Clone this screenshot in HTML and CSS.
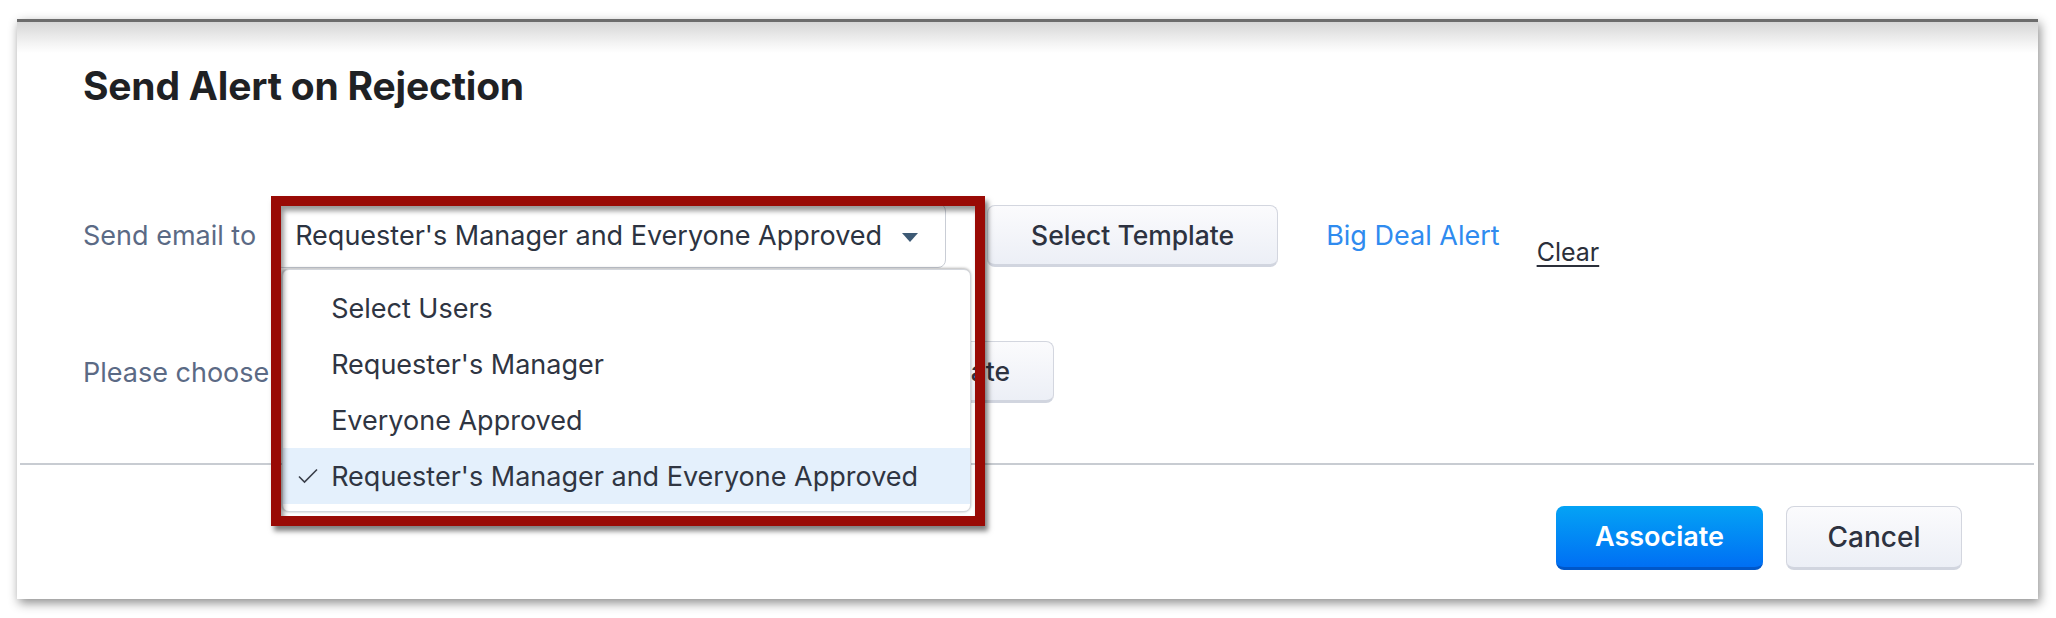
FILE: index.html
```html
<!DOCTYPE html>
<html lang="en">
<head>
<meta charset="utf-8">
<title>Send Alert on Rejection</title>
<link rel="stylesheet" href="styles.css">
</head>
<body>
<div class="frame">
  <div class="card">
    <div class="card-strip"></div>
    <h1 class="title">Send Alert on Rejection</h1>

    <div class="form-row row-email">
      <span class="label">Send email to</span>
      <div class="select-wrap">
        <div class="select">
          <span class="select-value">Requester's Manager and Everyone Approved</span>
          <svg class="caret" width="16" height="9" viewBox="0 0 16 9"><path d="M0 0H16L8 9Z" fill="#3d5a75"/></svg>
        </div>
        <ul class="menu">
          <li class="menu-item">Select Users</li>
          <li class="menu-item">Requester's Manager</li>
          <li class="menu-item">Everyone Approved</li>
          <li class="menu-item selected">
            <svg class="check" width="20" height="16" viewBox="0 0 20 16"><path d="M1 8.5L6.5 14L19 1.5" fill="none" stroke="#3a3f4a" stroke-width="1.6"/></svg>
            Requester's Manager and Everyone Approved
          </li>
        </ul>
        <div class="highlight"></div>
      </div>
      <button class="btn btn-light btn-template">Select Template</button>
      <a class="link">Big Deal Alert</a>
      <a class="clear">Clear</a>
    </div>

    <div class="form-row row-template">
      <span class="label label-col">Please choose</span>
      <button class="btn btn-light btn-template">Select Template</button>
    </div>

    <div class="divider"></div>

    <div class="footer">
      <button class="btn btn-primary">Associate</button>
      <button class="btn btn-light btn-cancel">Cancel</button>
    </div>
  </div>
</div>
</body>
</html>
```

FILE: styles.css
```css
* { box-sizing: border-box; }

html, body {
  margin: 0;
  padding: 0;
  background: #ffffff;
}

body {
  font-family: "Inter", "Liberation Sans", sans-serif;
  color: #2c3341;
}

.frame {
  padding: 19px 18px 19px 17px;
}

.card {
  background: #ffffff;
  border-top: 3px solid #6c6c6c;
  box-shadow: 2px 4px 10px rgba(0, 0, 0, 0.45);
  height: 580px;
  display: flex;
  flex-direction: column;
}

.card-strip {
  height: 31px;
  background: linear-gradient(#d6d6d6, #f4f4f4 70%, #ffffff);
}

.title {
  margin: 9px 0 0 66px;
  font-size: 39px;
  line-height: 48px;
  font-weight: 700;
  color: #1f2124;
  letter-spacing: -0.2px;
}

.form-row {
  display: flex;
  align-items: center;
  padding-left: 66px;
}

.row-email {
  margin-top: 93px;
  height: 65px;
}

.row-template {
  margin-top: 73px;
  height: 62px;
}

.label {
  font-size: 27px;
  color: #5b6a85;
  white-space: nowrap;
}

.label-col {
  width: 680px;
}

.select-wrap {
  position: relative;
  margin-left: 18px;
}

.select {
  width: 672px;
  height: 65px;
  border: 1px solid #c9cdd5;
  border-radius: 8px;
  background: #ffffff;
  display: flex;
  align-items: center;
  padding: 0 27px 0 20px;
}

.select-value {
  flex: 1;
  font-size: 27px;
  color: #2c3341;
  white-space: nowrap;
}

.caret {
  display: block;
  margin-top: 3px;
}

.menu {
  position: absolute;
  left: 8px;
  top: 66px;
  width: 689px;
  height: 243px;
  margin: 0;
  padding: 10px 0 0 0;
  list-style: none;
  background: #ffffff;
  border: 1px solid #d3d6dc;
  border-radius: 7px;
  box-shadow: -1px 0 3px rgba(0, 0, 0, 0.2), 0 -1px 3px rgba(0, 0, 0, 0.2);
  z-index: 2;
}

.menu-item {
  position: relative;
  height: 56px;
  display: flex;
  align-items: center;
  padding-left: 48px;
  font-size: 27px;
  color: #2f3542;
  white-space: nowrap;
}

.menu-item.selected {
  background: #e4f0fc;
}

.check {
  position: absolute;
  left: 15px;
  top: 20px;
}

.highlight {
  position: absolute;
  left: -3px;
  top: -7px;
  width: 714px;
  height: 330px;
  border: 10px solid #990a05;
  box-shadow: 3px 5px 5px rgba(0, 0, 0, 0.5), inset 3px 5px 5px rgba(0, 0, 0, 0.4);
  z-index: 3;
}

.btn {
  font-family: "Inter", "Liberation Sans", sans-serif;
  border-radius: 8px;
  cursor: pointer;
  padding: 0;
}

.btn-light {
  background: linear-gradient(#fbfbfd, #eceff6);
  border: 1px solid #d3d6df;
  border-bottom: 3px solid #d1d5df;
  color: #2d3240;
}

.btn-template {
  width: 291px;
  height: 62px;
  font-size: 26.5px;
  font-weight: 500;
}

.row-email .btn-template {
  margin-left: 41px;
}

.link {
  margin-left: 48px;
  font-size: 27px;
  color: #2f8bef;
  white-space: nowrap;
}

.clear {
  margin-left: 37px;
  margin-top: 32px;
  font-size: 25px;
  color: #2b2f3a;
  text-decoration: underline;
  text-underline-offset: 4px;
}

.divider {
  margin: 60px 4px 0 3px;
  height: 2px;
  background: #c8ccd2;
}

.footer {
  display: flex;
  justify-content: flex-end;
  gap: 23px;
  padding: 41px 76px 0 0;
}

.btn-primary {
  width: 207px;
  height: 64px;
  background: linear-gradient(#04a3f5, #006ff4);
  border: none;
  border-bottom: 3px solid #0057c9;
  color: #ffffff;
  font-size: 27px;
  font-weight: 600;
}

.btn-cancel {
  width: 176px;
  height: 64px;
  font-size: 28px;
  font-weight: 500;
}
```
